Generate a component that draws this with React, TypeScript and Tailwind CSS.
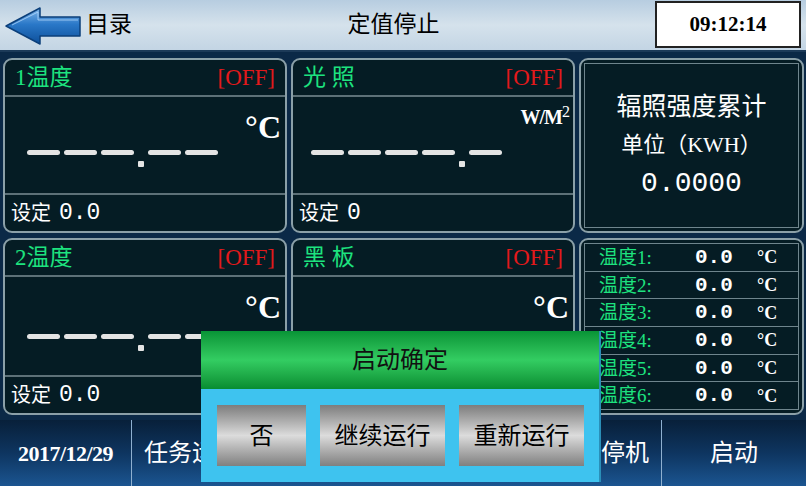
import React from "react";

const CJK = "font-['Liberation_Serif','Noto_Sans_CJK_SC',serif]";
const MONO = "font-['Liberation_Mono','Noto_Sans_CJK_SC',monospace]";

function BackArrow() {
  return (
    <svg width="78" height="40" viewBox="0 0 78 40">
      <defs>
        <linearGradient id="arw" x1="0" y1="0" x2="0" y2="1">
          <stop offset="0" stopColor="#7fb6ea" />
          <stop offset="0.45" stopColor="#2a78c8" />
          <stop offset="1" stopColor="#0d4f9a" />
        </linearGradient>
      </defs>
      <path d="M2 20 L36 2 L36 11 L76 11 L76 30 L36 30 L36 38 Z" fill="url(#arw)" stroke="#0b3f7a" strokeWidth="1.5" strokeLinejoin="round" />
      <path d="M8 19 L34 6 L34 14 L74 14" fill="none" stroke="#bfe0ff" strokeWidth="1" opacity="0.7" />
    </svg>
  );
}

function Dashes({ before, after }: { before: number; after: number }) {
  const bar = "w-[33px] h-[5px] rounded-full bg-[#e4e4e4]";
  return (
    <div className="flex items-start gap-[4px]">
      {[...Array(before)].map((_, i) => (
        <div key={"b" + i} className={bar} />
      ))}
      <div className="w-[6px] h-[6px] rounded-[1px] bg-[#e4e4e4] mt-[11px]" />
      {[...Array(after)].map((_, i) => (
        <div key={"a" + i} className={bar} />
      ))}
    </div>
  );
}

function Panel({ children, className = "" }: { children: React.ReactNode; className?: string }) {
  return (
    <div className={`rounded-[9px] border-2 border-[#8ba0a8] bg-[#051c24] overflow-hidden flex flex-col ${className}`}>
      {children}
    </div>
  );
}

function ValuePanel({
  title,
  unit,
  setVal,
  before,
  after,
  dashPad,
  unitBox = "h-[53px]",
}: {
  title: string;
  unit: React.ReactNode;
  setVal: string;
  before: number;
  after: number;
  dashPad: string;
  unitBox?: string;
}) {
  return (
    <Panel>
      <div className="h-[37px] flex items-center justify-between pl-[10px] pr-[10px] border-b-2 border-[#5d7178]">
        <span className={`${CJK} text-[23px] text-[#1de37f] leading-none whitespace-pre`}>{title}</span>
        <span className="font-['Liberation_Serif',serif] text-[23px] text-[#e3191b] leading-none">[OFF]</span>
      </div>
      <div className="flex-1 flex flex-col">
        <div className={`flex justify-end pr-[4px] pt-[14px] ${unitBox}`}>{unit}</div>
        <div className={dashPad}>
          <Dashes before={before} after={after} />
        </div>
      </div>
      <div className="h-[38px] flex items-center pl-[6px] border-t-2 border-[#5d7178] text-white">
        <span className={`${CJK} text-[20px] leading-none`}>设定</span>
        <span className={`${MONO} text-[23px] leading-none ml-[8px]`}>{setVal}</span>
      </div>
    </Panel>
  );
}

const celsius = (
  <span className="font-['Liberation_Serif',serif] font-bold text-[32px] text-white leading-none">°C</span>
);

export default function App() {
  const temps = [1, 2, 3, 4, 5, 6];
  return (
    <div className="w-[806px] h-[486px] relative overflow-hidden bg-[#0b2947] flex flex-col">
      {/* header */}
      <div className="h-[52px] flex items-center relative bg-gradient-to-b from-[#b7cde0] via-[#d5e2ec] to-[#c3d5e4] border-b-2 border-[#1c3a58]">
        <div className="ml-[4px] mt-[2px]">
          <BackArrow />
        </div>
        <span className={`${CJK} text-[23px] text-black ml-[4px]`}>目录</span>
        <div className="flex-1 flex justify-center">
          <span className={`${CJK} text-[23px] text-black`}>定值停止</span>
        </div>
        <div className="w-[146px] h-[47px] mr-[5px] mb-[1px] bg-white border-2 border-[#222] flex items-center justify-center">
          <span className="font-['Liberation_Serif',serif] font-bold text-[21px] text-black">09:12:14</span>
        </div>
      </div>

      {/* panels */}
      <div className="grid grid-cols-[284px_284px_225px] grid-rows-[175px_177px] gap-x-[4px] gap-y-[5px] pl-[3px] pt-[6px]">
        <ValuePanel title="1温度" unit={celsius} setVal="0.0" before={3} after={2} dashPad="pl-[22px]" />
        <ValuePanel
          title="光 照"
          unit={
            <span className="font-['Liberation_Serif',serif] font-bold text-[20px] text-white leading-none tracking-[-1px] mt-[-4px]">
              W/M<sup className="text-[16px] font-normal top-[-0.45em]">2</sup>
            </span>
          }
          setVal="0"
          before={4}
          after={1}
          dashPad="pl-[18px]"
        />
        <Panel className="p-[3px]">
          <div className="flex-1 border border-[#6f858d] flex flex-col items-center justify-center text-white">
            <span className={`${CJK} text-[25px] leading-none`}>辐照强度累计</span>
            <span className={`${CJK} text-[22px] leading-none mt-[15px]`}>单位（KWH）</span>
            <span className={`${MONO} text-[28px] leading-none mt-[14px]`}>0.0000</span>
          </div>
        </Panel>

        <ValuePanel title="2温度" unit={celsius} setVal="0.0" before={3} after={2} dashPad="pl-[22px]" unitBox="h-[57px]" />
        <ValuePanel title="黑 板" unit={celsius} setVal="0" before={4} after={1} dashPad="pl-[18px]" unitBox="h-[57px]" />
        <Panel className="p-[3px]">
          <div className="flex-1 border border-[#6f858d] flex flex-col">
            {temps.map((n, i) => (
              <div
                key={n}
                className={`flex-1 flex items-center pl-[14px] ${i < 5 ? "border-b border-[#6f858d]" : ""}`}
              >
                <span className={`${CJK} text-[19px] text-[#1de37f] leading-none w-[96px]`}>温度{n}:</span>
                <span className={`${MONO} font-bold text-[21px] text-white leading-none w-[62px]`}>0.0</span>
                <span className="font-['Liberation_Serif',serif] font-bold text-[18px] text-white leading-none">°C</span>
              </div>
            ))}
          </div>
        </Panel>
      </div>

      {/* bottom bar */}
      <div className="mt-[5px] flex-1 flex bg-gradient-to-b from-[#08203a] via-[#0e3560] to-[#1b5591]">
        <div className="w-[132px] flex items-center justify-center border-r border-[#8fb0d0]">
          <span className="font-['Liberation_Serif',serif] font-bold text-[22px] text-white tracking-[-0.5px]">2017/12/29</span>
        </div>
        <div className="flex-1 flex items-center pl-[12px] border-r border-[#8fb0d0]">
          <span className={`${CJK} text-[24px] text-white`}>任务运行</span>
          <span className={`${CJK} text-[24px] text-white ml-auto mr-[12px]`}>停机</span>
        </div>
        <div className="w-[144px] flex items-center justify-center">
          <span className={`${CJK} text-[24px] text-white`}>启动</span>
        </div>
      </div>

      {/* dialog */}
      <div className="absolute left-[201px] top-[331px] w-[400px] h-[151px] flex flex-col bg-[#3ec3ef] border-r-2 border-[#2a8fb8]">
        <div className="h-[58px] flex items-center justify-center bg-gradient-to-b from-[#079436] via-[#33cd62] to-[#078d31]">
          <span className={`${CJK} text-[24px] text-[#111]`}>启动确定</span>
        </div>
        <div className="flex-1 flex items-start gap-[14px] pl-[16px] pt-[16px]">
          {[
            ["否", "w-[89px]"],
            ["继续运行", "w-[125px]"],
            ["重新运行", "w-[125px]"],
          ].map(([label, w]) => (
            <div
              key={label}
              className={`${w} h-[61px] flex items-center justify-center bg-gradient-to-b from-[#7d7d7d] via-[#dcdcdc] to-[#808080]`}
            >
              <span className={`${CJK} text-[24px] text-black`}>{label}</span>
            </div>
          ))}
        </div>
      </div>
    </div>
  );
}
